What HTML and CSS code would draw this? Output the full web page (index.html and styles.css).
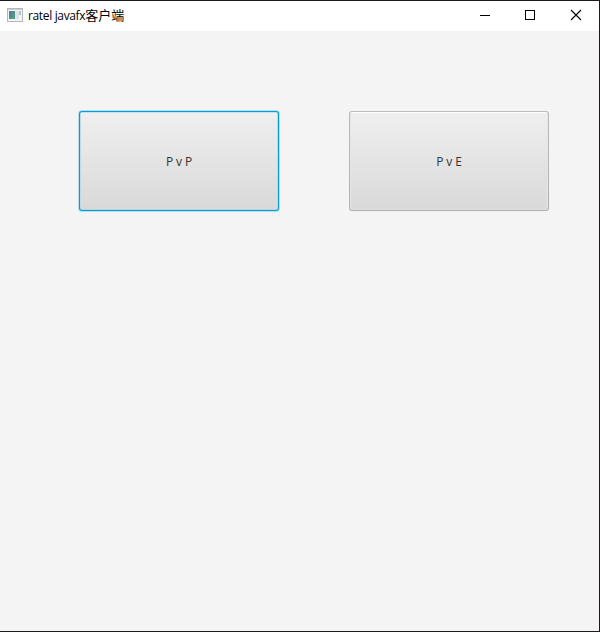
FILE: index.html
```html
<!DOCTYPE html>
<html lang="zh-CN">
<head>
<meta charset="utf-8">
<title>ratel javafx客户端</title>
<link rel="stylesheet" href="styles.css">
</head>
<body>
<div class="window">
  <header class="titlebar">
    <svg class="app-icon" width="16" height="14" viewBox="0 0 16 14">
      <defs>
        <linearGradient id="pane" x1="0" y1="0" x2="1" y2="1">
          <stop offset="0" stop-color="#4a78a8"/>
          <stop offset="1" stop-color="#56a578"/>
        </linearGradient>
      </defs>
      <rect x=".5" y=".5" width="15" height="13" fill="#f4f4f4" stroke="#b4b8bb"/>
      <rect x="1" y="1" width="14" height="1" fill="#c9cdd0"/>
      <rect x="2" y="3" width="6" height="8" fill="url(#pane)"/>
      <rect x="8" y="3" width="4" height="8" fill="#dfe3e6"/>
      <rect x="12" y="3" width="2" height="4" fill="#a9c8c4"/>
    </svg>
    <h1 class="title"><span class="latin">ratel javafx</span><span class="cjk">客户端</span></h1>
    <div class="controls">
      <svg width="46" height="30" viewBox="0 0 46 30"><path d="M18 14.5h10" stroke="#000"/></svg>
      <svg width="45" height="30" viewBox="0 0 45 30"><rect x="17.5" y="9.5" width="9" height="9" fill="none" stroke="#000"/></svg>
      <svg width="46" height="30" viewBox="0 0 46 30"><path d="M18 9l10 10m0-10l-10 10" stroke="#000" stroke-width="1.1"/></svg>
    </div>
  </header>
  <main class="content">
    <button class="mode focused"><span class="face">P v P</span></button>
    <button class="mode"><span class="face">P v E</span></button>
  </main>
</div>
</body>
</html>
```

FILE: styles.css
```css
* { box-sizing: border-box; }

body { margin: 0; }

.window {
  width: 600px;
  height: 632px;
  display: flex;
  flex-direction: column;
  border: solid #1c1a1e;
  border-width: 1px 1px 1px 0;
  background: #f4f4f4;
  overflow: hidden;
}

.titlebar {
  display: flex;
  flex: none;
  height: 30px;
  padding-left: 7px;
  background: #fff;
}

.app-icon { margin-top: 7px; }

.title {
  display: flex;
  margin: 0 0 0 5px;
  font: 400 12px/29px "Open Sans", "Noto Sans CJK SC", sans-serif;
  color: #000;
  white-space: nowrap;
}

.latin { letter-spacing: -0.35px; }

.cjk { font-size: 13px; }

.controls {
  display: flex;
  margin-left: auto;
}

.content {
  display: flex;
  gap: 70px;
  padding: 80px 0 0 79px;
}

.mode {
  width: 200px;
  height: 100px;
  padding: 1px;
  border: 0;
  border-radius: 3px;
  background: linear-gradient(#bababa, #b0b0b0);
}

.face {
  display: flex;
  align-items: center;
  justify-content: center;
  height: 100%;
  padding-top: 2px;
  border: 1px solid;
  border-color: #fdfdfd #e6e6e6 #dedede;
  border-radius: 2px;
  background: linear-gradient(#efefef, #d9d9d9);
  color: #333;
  font: 12px/16px "Open Sans", sans-serif;
  letter-spacing: -0.15px;
}

.focused {
  background: #039ed3;
  box-shadow: 0 0 0 1px #b5dfed;
}

.focused .face { border-color: #c5e2ec #bedae4 #b5d3de; }
```
